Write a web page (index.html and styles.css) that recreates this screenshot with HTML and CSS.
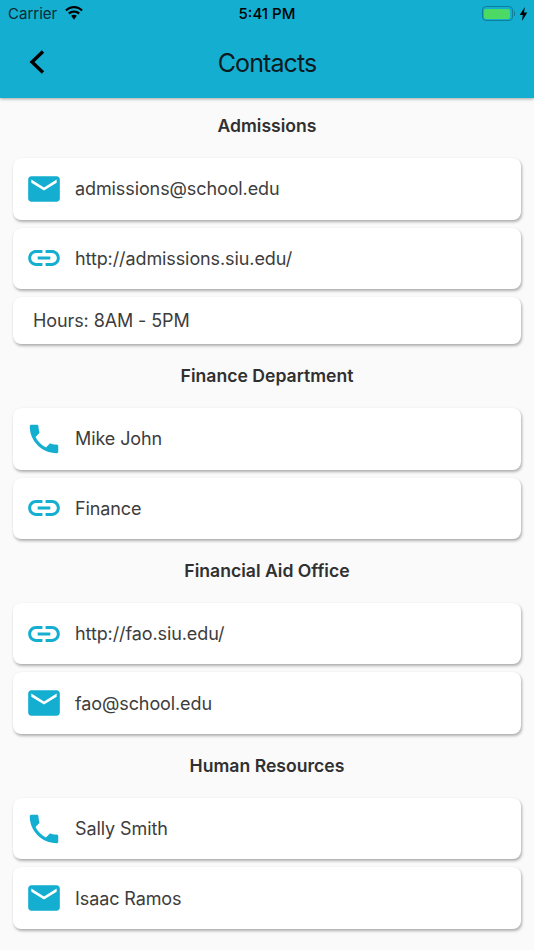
FILE: index.html
```html
<!DOCTYPE html>
<html lang="en">
<head>
<meta charset="utf-8">
<title>Contacts</title>
<link rel="stylesheet" href="styles.css">
</head>
<body>
<svg class="defs" width="0" height="0" aria-hidden="true">
  <symbol id="mail" viewBox="0 0 24 24"><path d="M20 4H4c-1.1 0-1.99.9-1.99 2L2 18c0 1.1.9 2 2 2h16c1.1 0 2-.9 2-2V6c0-1.1-.9-2-2-2zm0 4l-8 5-8-5V6l8 5 8-5v2z"/></symbol>
  <symbol id="link" viewBox="0 0 24 24"><path d="M3.9 12c0-1.71 1.39-3.1 3.1-3.1h4V7H7c-2.76 0-5 2.24-5 5s2.24 5 5 5h4v-1.9H7c-1.71 0-3.1-1.39-3.1-3.1zM8 13h8v-2H8v2zm9-6h-4v1.9h4c1.71 0 3.1 1.39 3.1 3.1s-1.39 3.1-3.1 3.1h-4V17h4c2.76 0 5-2.24 5-5s-2.24-5-5-5z"/></symbol>
  <symbol id="phone" viewBox="0 0 24 24"><path d="M6.62 10.79c1.44 2.83 3.76 5.14 6.59 6.59l2.2-2.2c.27-.27.67-.36 1.02-.24 1.12.37 2.33.57 3.57.57.55 0 1 .45 1 1V20c0 .55-.45 1-1 1-9.39 0-17-7.61-17-17 0-.55.45-1 1-1h3.5c.55 0 1 .45 1 1 0 1.25.2 2.45.57 3.57.11.35.03.74-.25 1.02l-2.2 2.2z"/></symbol>
</svg>
<header class="appbar">
  <div class="status">
    <div class="status-left">
      <span class="carrier">Carrier</span>
      <svg class="wifi" viewBox="0 0 18 13"><path d="M9 2.2c2.6 0 5 1 6.800 2.700L17.200 3.400C15 1.300 12.100 0 9 0S3 1.300.8 3.400l1.400 1.500C4 3.200 6.400 2.200 9 2.200z"/><path d="M9 6.200c1.500 0 2.900.6 4 1.600l1.500-1.500C13 4.900 11.100 4.100 9 4.100s-4 .8-5.500 2.200L5 7.800c1.100-1 2.500-1.600 4-1.600z"/><path d="M9 8.100c-1 0-1.900.4-2.600 1L9 12.800l2.600-3.700c-.7-.6-1.600-1-2.600-1z"/></svg>
    </div>
    <span class="clock">5:41 PM</span>
    <div class="status-right">
      <span class="battery"><span class="battery-fill"></span></span>
      <span class="battery-tip"></span>
      <svg class="bolt" viewBox="0 0 8 13"><path d="M5.200 0 .5 7.400h2.900L2.600 13l4.900-7.800H4.500z"/></svg>
    </div>
  </div>
  <div class="toolbar">
    <svg class="back" viewBox="0 0 18 26"><path d="M15 2.500 4 13l11 10.500"/></svg>
    <h1 class="title">Contacts</h1>
  </div>
</header>
<main class="content">
  <h2 class="heading heading-first">Admissions</h2>
  <div class="card"><svg class="icon"><use href="#mail"/></svg><span class="label">admissions@school.edu</span></div>
  <div class="card"><svg class="icon"><use href="#link"/></svg><span class="label">http://admissions.siu.edu/</span></div>
  <div class="card card-plain"><span class="label">Hours: 8AM - 5PM</span></div>
  <h2 class="heading">Finance Department</h2>
  <div class="card"><svg class="icon"><use href="#phone"/></svg><span class="label">Mike John</span></div>
  <div class="card"><svg class="icon"><use href="#link"/></svg><span class="label">Finance</span></div>
  <h2 class="heading">Financial Aid Office</h2>
  <div class="card"><svg class="icon"><use href="#link"/></svg><span class="label">http://fao.siu.edu/</span></div>
  <div class="card"><svg class="icon"><use href="#mail"/></svg><span class="label">fao@school.edu</span></div>
  <h2 class="heading">Human Resources</h2>
  <div class="card"><svg class="icon"><use href="#phone"/></svg><span class="label">Sally Smith</span></div>
  <div class="card"><svg class="icon"><use href="#mail"/></svg><span class="label">Isaac Ramos</span></div>
</main>
</body>
</html>
```
FILE: styles.css
```css
* { box-sizing: border-box; }
html, body { margin: 0; padding: 0; }
body {
  width: 534px;
  height: 950px;
  overflow: hidden;
  background: #fafafa;
  font-family: Inter, Roboto, "Liberation Sans", sans-serif;
}
.defs { position: absolute; }
.appbar {
  height: 98px;
  background: #14aed0;
  color: #000;
  box-shadow: 0 1px 3px rgba(0,0,0,.35);
  position: relative;
}
.status {
  height: 27px;
  padding: 0 6px 0 8px;
  display: flex;
  align-items: center;
  justify-content: space-between;
  position: relative;
}
.status-left { display: flex; align-items: center; gap: 7px; }
.carrier { font-size: 15px; color: #0a2a33; }
.wifi { width: 20px; height: 14px; fill: #000; margin-top: -1px; }
.clock {
  font-size: 15px;
  font-weight: 500;
  position: absolute;
  left: 0;
  right: 0;
  text-align: center;
}
.status-right { display: flex; align-items: center; }
.battery {
  width: 31px;
  height: 15px;
  border: 1.5px solid #0d7f99;
  border-radius: 4px;
  padding: 1.5px;
  display: flex;
}
.battery-fill { flex: 1; background: #4cd964; border-radius: 2px; }
.battery-tip { width: 1.5px; height: 5px; background: #0d7f99; margin: 0 4px 0 1px; }
.bolt { width: 9px; height: 14px; fill: #000; }
.toolbar {
  height: 71px;
  display: flex;
  align-items: center;
  justify-content: center;
  position: relative;
}
.back {
  position: absolute;
  left: 28px;
  top: 22px;
  width: 18px;
  height: 26px;
  fill: none;
  stroke: #000;
  stroke-width: 3.4;
}
.title {
  margin: 0;
  font-size: 25px;
  font-weight: 400;
  letter-spacing: -.9px;
  color: #0a1a20;
}
.content { padding: 0 13px; }
.heading {
  margin: -8px 0 0;
  height: 63.85px;
  padding-top: 20.7px;
  line-height: 22px;
  font-size: 17.6px;
  font-weight: 600;
  text-align: center;
  color: #303030;
}
.heading-first { margin-top: 0; height: 60px; padding-top: 17px; }
.card {
  height: 61.5px;
  margin-bottom: 8px;
  padding-left: 12px;
  display: flex;
  align-items: center;
  gap: 12px;
  background: #fff;
  border-radius: 8px;
  box-shadow: 0 0 1px rgba(0,0,0,.08), 1px 2px 3px rgba(0,0,0,.3);
}
.card-plain { height: 47.25px; padding: 0 0 .25px 20px; }
.icon { width: 38px; height: 38px; fill: #14aed0; flex: none; }
.label { font-size: 18px; letter-spacing: -.1px; color: #3d3d3d; }
```
